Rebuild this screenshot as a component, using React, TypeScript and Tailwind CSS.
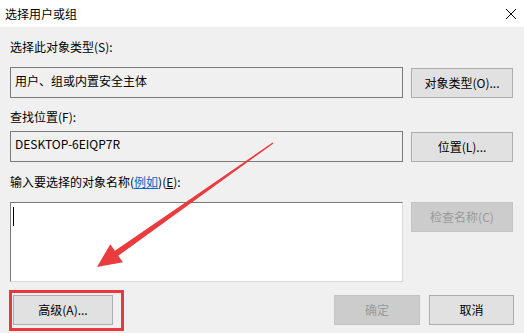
import React from "react";

const font = { fontFamily: '"Noto Sans CJK SC", "Noto Sans", sans-serif' };

function Btn({ children, w, disabled }: { children: React.ReactNode; w: string; disabled?: boolean }) {
  return (
    <div
      className={
        disabled
          ? `${w} h-[30px] flex items-center justify-center bg-[#cccccc] border border-[#c4c4c4] text-[#9a9a9a] text-[12px] leading-[16px]`
          : `${w} h-[30px] flex items-center justify-center bg-[#e1e1e1] border border-[#adadad] text-black text-[12px] leading-[16px]`
      }
    >
      {children}
    </div>
  );
}

export default function App() {
  return (
    <div className="relative w-[524px] h-[333px] bg-[#f0f0f0] overflow-hidden text-black" style={font}>
      <div className="h-[27px] bg-white flex items-center justify-between pl-[5px] pr-[6px]">
        <span className="text-[12px] leading-[16px] text-black">选择用户或组</span>
        <svg width="12" height="12" viewBox="0 0 12 12" className="mr-[1px]">
          <path d="M1 1 L11 11 M11 1 L1 11" stroke="#000" strokeWidth="1" fill="none" />
        </svg>
      </div>

      <div className="flex flex-col pl-[10px] pr-[10px]">
        <div className="mt-[12px] h-[16px] text-[12px] leading-[16px]">选择此对象类型(S):</div>
        <div className="mt-[12px] flex items-center gap-[8px]">
          <div className="w-[393px] h-[31px] border border-[#7a7a7a] bg-[#f0f0f0] pl-[4px] pt-[5px] text-[12px] leading-[16px]">
            用户、组或内置安全主体
          </div>
          <Btn w="w-[102px]">对象类型(O)...</Btn>
        </div>

        <div className="mt-[11px] h-[16px] text-[12px] leading-[16px]">查找位置(F):</div>
        <div className="mt-[6px] flex items-center gap-[8px]">
          <div className="w-[393px] h-[31px] border border-[#7a7a7a] bg-[#f0f0f0] pl-[4px] pt-[4px] text-[12px] leading-[16px]">
            DESKTOP-6EIQP7R
          </div>
          <Btn w="w-[102px]">位置(L)...</Btn>
        </div>

        <div className="mt-[12px] h-[16px] text-[12px] leading-[16px]">
          输入要选择的对象名称(<span className="text-[#0066cc] underline">例如</span>)(<span className="underline">E</span>):
        </div>
        <div className="mt-[12px] flex items-start gap-[8px]">
          <div className="w-[393px] h-[80px] bg-white border-t border-l border-[#7a7a7a] border-r-[#dadada] border-b-[#dadada] border-r border-b pl-[2px] pt-[4px]">
            <div className="w-[1px] h-[19px] bg-black"></div>
          </div>
          <Btn w="w-[102px]" disabled>检查名称(C)</Btn>
        </div>

        <div className="mt-[13px] flex items-center">
          <div className="ml-[3px]">
            <Btn w="w-[100px]">高级(A)...</Btn>
          </div>
          <div className="ml-auto flex gap-[9px]">
            <Btn w="w-[86px]" disabled>确定</Btn>
            <Btn w="w-[85px]">取消</Btn>
          </div>
        </div>
      </div>

      <div className="absolute left-[9px] top-[290px] w-[115px] h-[41px] border-[3px] border-[#e8383d]"></div>

      <svg className="absolute left-0 top-0" width="524" height="333" viewBox="0 0 524 333">
        <polygon
          points="273.4,143.5 118.3,255.7 122.9,262.2 97,267 110.3,244.2 114.9,250.7 272.6,142.5"
          fill="#ea3b3f"
        />
      </svg>
    </div>
  );
}
